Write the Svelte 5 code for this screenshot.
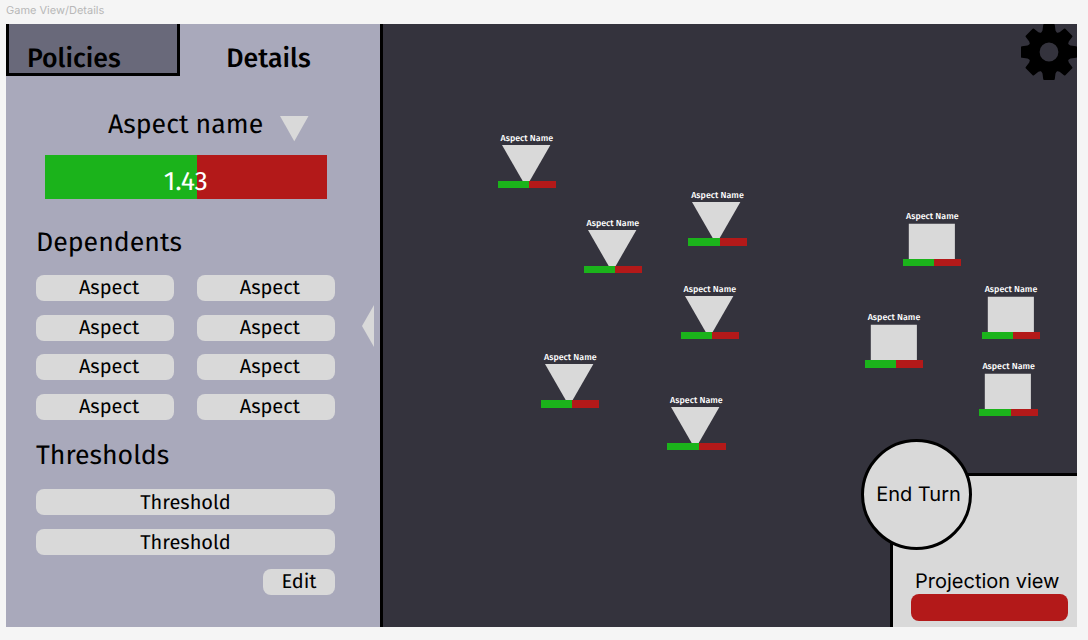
<script>
  const dependents = Array(8).fill('Aspect');
  const thresholds = ['Threshold', 'Threshold'];
  const nodes = [
    { x: 497.6, y: 180.2, shape: 'triangle' },
    { x: 583.6, y: 265.6, shape: 'triangle' },
    { x: 688.3, y: 237.8, shape: 'triangle' },
    { x: 680.6, y: 331.4, shape: 'triangle' },
    { x: 541.1, y: 400.1, shape: 'triangle' },
    { x: 667.2, y: 442.4, shape: 'triangle' },
    { x: 903.1, y: 258.6, shape: 'square' },
    { x: 981.8, y: 331.4, shape: 'square' },
    { x: 864.8, y: 360, shape: 'square' },
    { x: 979.5, y: 408.5, shape: 'square' }
  ];
  const teeth = [0, 45, 90, 135, 180, 225, 270, 315];
</script>

<div class="canvas">
  <div class="caption">Game View/Details</div>
  <div class="frame">
    <aside class="sidebar">
      <nav class="tabs">
        <div class="tab inactive">Policies</div>
        <div class="tab active">Details</div>
      </nav>
      <div class="name-row">
        <span class="name">Aspect name</span>
        <svg width="29" height="26" viewBox="0 0 29 26"><path d="M0 0H28.5L14.3 25.3Z" fill="#d9d9d9" /></svg>
      </div>
      <div class="meter"><span>1.43</span></div>
      <h2 class="first">Dependents</h2>
      <div class="grid">
        {#each dependents as label}
          <div class="pill">{label}</div>
        {/each}
      </div>
      <h2 class="second">Thresholds</h2>
      <div class="list">
        {#each thresholds as label}
          <div class="pill">{label}</div>
        {/each}
        <div class="pill edit">Edit</div>
      </div>
      <svg class="collapse" width="12" height="42" viewBox="0 0 12 42"><path d="M12 0V42L0 21Z" fill="#d9d9d9" /></svg>
    </aside>

    <main class="board">
      {#each nodes as node}
        <div class="node" style="left: {node.x - 383.4}px; top: {node.y - 71.9}px">
          <div class="label">Aspect Name</div>
          <svg class="shape" width="58.4" height="36" viewBox="0 0 58.4 36">
            {#if node.shape === 'triangle'}
              <path d="M4 0H52.4L31.7 36H24.7Z" fill="#d9d9d9" />
            {:else}
              <path d="M5.8 0.7H51.9V36H5.8Z" fill="#d9d9d9" />
            {/if}
          </svg>
          <div class="bar"></div>
        </div>
      {/each}

      <svg class="gear" width="58" height="58" viewBox="-29 -29 58 58">
        <circle r="15.1" fill="none" stroke="#000" stroke-width="11.4" />
        {#each teeth as angle}
          <path d="M-4.9 -28H4.9Q5.7 -28 5.8 -27L6.5 -21.5L8.5 -18H-8.5L-6.5 -21.5L-5.8 -27Q-5.7 -28 -4.9 -28Z" transform="rotate({angle})" />
        {/each}
      </svg>

      <section class="projection">
        <div class="title">Projection view</div>
        <div class="value"></div>
      </section>
      <div class="end-turn">End Turn</div>
    </main>
  </div>
</div>

<style>
  :global(body) { margin: 0; background: #f5f5f5; }
  .canvas {
    box-sizing: border-box;
    width: 1088px;
    height: 640px;
    padding-left: 6px;
    overflow: hidden;
    background: #f5f5f5;
    font-family: "Fira Sans", "Noto Sans", sans-serif;
    text-rendering: geometricPrecision;
    color: #000;
  }
  .caption {
    height: 24.3px;
    line-height: 21px;
    font-family: Inter, sans-serif;
    font-size: 11px;
    color: #b8b8b8;
  }
  .frame { display: flex; width: 1071px; height: 602.5px; overflow: hidden; }
  .sidebar {
    position: relative;
    box-sizing: border-box;
    flex: none;
    width: 377.4px;
    border-right: 3px solid #000;
    background: #a9a9bb;
  }
  .tabs { display: flex; height: 52px; }
  .tab {
    box-sizing: border-box;
    font-size: 26.7px;
    font-weight: 500;
    line-height: 70px;
  }
  .inactive {
    width: 174px;
    padding-left: 18px;
    border: 3px solid #000;
    border-top: 0;
    background: #69697a;
  }
  .active { flex: 1; padding-left: 46.3px; }
  .name-row { display: flex; align-items: center; height: 40px; margin-top: 27.7px; padding-left: 102px; }
  .name { width: 172px; padding-top: 3px; font-size: 26.7px; line-height: 40px; white-space: nowrap; }
  .name-row svg { margin-top: 10px; }
  .meter {
    width: 281.5px;
    height: 44px;
    margin: 11px 0 0 39px;
    background: linear-gradient(90deg, #1bb31b 54%, #b31919 54%);
    color: #fff;
    font-size: 26.7px;
    line-height: 54px;
    text-align: center;
  }
  h2 {
    height: 36px;
    margin: 0 0 0 30px;
    font-size: 26.7px;
    font-weight: 400;
    line-height: 40px;
  }
  .first { margin-top: 24px; }
  .second { margin-top: 16.4px; }
  .grid {
    display: grid;
    grid-template-columns: 138.2px 138.2px;
    gap: 13.6px 22.6px;
    margin: 16.3px 0 0 30px;
  }
  .list { display: flex; flex-direction: column; gap: 13.7px; width: 299px; margin: 17px 0 0 30px; }
  .pill {
    box-sizing: border-box;
    height: 26px;
    padding-left: 8px;
    border-radius: 8px;
    background: #d9d9d9;
    font-size: 20px;
    line-height: 27px;
    text-align: center;
  }
  .list .pill { padding-left: 0; line-height: 28px; }
  .list .edit { align-self: flex-end; width: 72px; line-height: 27px; }
  .collapse { position: absolute; left: 356px; top: 281px; }
  .board { position: relative; flex: 1; background: #34333d; }
  .node { position: absolute; width: 58.4px; }
  .label {
    height: 12px;
    margin: 0 -10px;
    color: #fff;
    font-size: 8.9px;
    font-weight: 500;
    line-height: 13.4px;
    text-align: center;
    white-space: nowrap;
  }
  .shape { display: block; }
  .bar { height: 7.5px; background: linear-gradient(90deg, #1bb31b 54%, #b31919 54%); }
  .gear { position: absolute; left: 636.6px; top: -1px; }
  .projection {
    position: absolute;
    right: 0;
    bottom: 0;
    box-sizing: border-box;
    width: 187px;
    height: 153.5px;
    padding: 93px 9px 0 18px;
    border: 3px solid #000;
    border-width: 3px 0 0 3px;
    background: #d9d9d9;
    font-family: Inter, sans-serif;
  }
  .title { height: 25px; margin-left: 4px; font-size: 20px; line-height: 25px; white-space: nowrap; }
  .value { height: 27px; border-radius: 8px; background: #b31919; }
  .end-turn {
    position: absolute;
    left: 477.6px;
    top: 414.5px;
    box-sizing: border-box;
    width: 111px;
    height: 111px;
    padding-left: 4px;
    border: 3px solid #000;
    border-radius: 50%;
    background: #d9d9d9;
    font-family: Inter, sans-serif;
    font-size: 20px;
    line-height: 105px;
    text-align: center;
  }
</style>
